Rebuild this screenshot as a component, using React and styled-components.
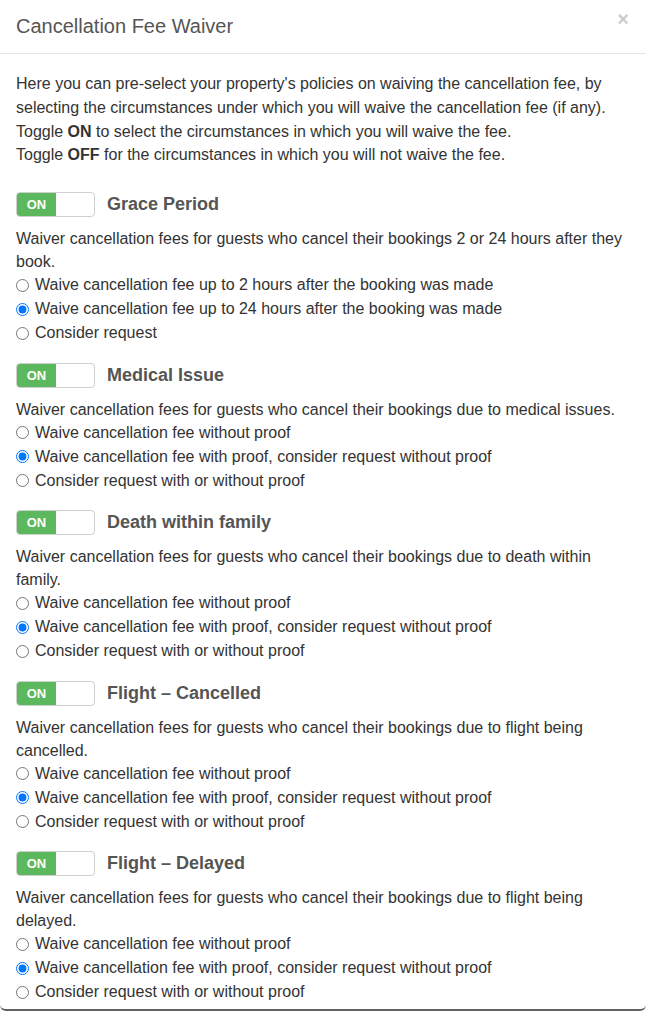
import React, { useState } from "react";
import styled, { createGlobalStyle } from "styled-components";

const GlobalStyle = createGlobalStyle`
  html, body {
    margin: 0;
    padding: 0;
    background: #ffffff;
  }
  body {
    font-family: "Liberation Sans", Arial, sans-serif;
    color: #333333;
  }
  * {
    box-sizing: border-box;
  }
`;

const Modal = styled.div`
  width: 646px;
  background: #ffffff;
  border-bottom: 2px solid #626262;
  border-radius: 0 0 6px 6px;
`;

const Header = styled.div`
  display: flex;
  justify-content: space-between;
  align-items: flex-start;
  padding: 12px 16px 13px 16px;
  border-bottom: 1px solid #e5e5e5;
`;

const Title = styled.h4`
  margin: 0;
  font-size: 20px;
  line-height: 28px;
  font-weight: normal;
  color: #555555;
`;

const Close = styled.button`
  border: 0;
  background: transparent;
  padding: 0;
  margin: -3px 1px 0 0;
  font-family: "Liberation Sans", Arial, sans-serif;
  font-size: 20px;
  font-weight: bold;
  line-height: 1;
  color: #000000;
  opacity: 0.2;
  cursor: pointer;
`;

const Body = styled.div`
  padding: 18px 16px 5px 16px;
  font-size: 16px;
`;

const Intro = styled.p`
  margin: 0;
  line-height: ${(p) => p.$lh || "23px"};
`;

const Sections = styled.div`
  display: flex;
  flex-direction: column;
  gap: 17.5px;
  margin-top: 26px;
`;

const Section = styled.section``;

const SectionHead = styled.div`
  display: flex;
  align-items: center;
  gap: 12px;
  margin-bottom: 10px;
`;

const Switch = styled.button`
  display: flex;
  width: 79px;
  height: 25px;
  padding: 0;
  border: 1px solid #cfcfcf;
  border-radius: 4px;
  overflow: hidden;
  background: #ffffff;
  cursor: pointer;
  flex-direction: ${(p) => (p.$on ? "row" : "row-reverse")};
`;

const SwitchLabel = styled.span`
  width: 39px;
  height: 100%;
  display: flex;
  align-items: center;
  justify-content: center;
  background: ${(p) => (p.$on ? "#5cb85c" : "#eeeeee")};
  color: ${(p) => (p.$on ? "#ffffff" : "#333333")};
  font-family: "Liberation Sans", Arial, sans-serif;
  font-size: 13px;
  font-weight: bold;
`;

const SectionTitle = styled.h3`
  margin: 0;
  font-size: 18px;
  font-weight: bold;
  line-height: 25px;
  color: #555555;
`;

const Desc = styled.p`
  margin: 0;
  line-height: 23px;
`;

const Options = styled.div`
  display: flex;
  flex-direction: column;
`;

const Option = styled.label`
  display: flex;
  align-items: center;
  height: 24px;
  line-height: 24px;
  cursor: pointer;

  input {
    margin: 0 6px 0 0;
    width: 13px;
    height: 13px;
  }
`;

const sections = [
  {
    id: "grace",
    title: "Grace Period",
    desc: "Waiver cancellation fees for guests who cancel their bookings 2 or 24 hours after they book.",
    options: [
      "Waive cancellation fee up to 2 hours after the booking was made",
      "Waive cancellation fee up to 24 hours after the booking was made",
      "Consider request",
    ],
  },
  {
    id: "medical",
    title: "Medical Issue",
    desc: "Waiver cancellation fees for guests who cancel their bookings due to medical issues.",
  },
  {
    id: "death",
    title: "Death within family",
    desc: "Waiver cancellation fees for guests who cancel their bookings due to death within family.",
  },
  {
    id: "flight-cancelled",
    title: "Flight \u2013 Cancelled",
    desc: "Waiver cancellation fees for guests who cancel their bookings due to flight being cancelled.",
  },
  {
    id: "flight-delayed",
    title: "Flight \u2013 Delayed",
    desc: "Waiver cancellation fees for guests who cancel their bookings due to flight being delayed.",
  },
];

const proofOptions = [
  "Waive cancellation fee without proof",
  "Waive cancellation fee with proof, consider request without proof",
  "Consider request with or without proof",
];

function WaiverSection({ data }) {
  const [on, setOn] = useState(true);
  const [choice, setChoice] = useState(1);
  const opts = data.options || proofOptions;

  return (
    <Section>
      <SectionHead>
        <Switch type="button" $on={on} onClick={() => setOn(!on)}>
          <SwitchLabel $on={on}>{on ? "ON" : "OFF"}</SwitchLabel>
        </Switch>
        <SectionTitle>{data.title}</SectionTitle>
      </SectionHead>
      <Desc>{data.desc}</Desc>
      <Options>
        {opts.map((o, i) => (
          <Option key={i}>
            <input
              type="radio"
              name={data.id}
              checked={choice === i}
              onChange={() => setChoice(i)}
            />
            {o}
          </Option>
        ))}
      </Options>
    </Section>
  );
}

export default function App() {
  return (
    <>
      <GlobalStyle />
      <Modal>
        <Header>
          <Title>Cancellation Fee Waiver</Title>
          <Close aria-label="Close">×</Close>
        </Header>
        <Body>
          <Intro $lh="24px">
            Here you can pre-select your property's policies on waiving the
            cancellation fee, by selecting the circumstances under which you
            will waive the cancellation fee (if any).
          </Intro>
          <Intro>
            Toggle <b>ON</b> to select the circumstances in which you will waive
            the fee.
            <br />
            Toggle <b>OFF</b> for the circumstances in which you will not waive
            the fee.
          </Intro>
          <Sections>
            {sections.map((s) => (
              <WaiverSection key={s.id} data={s} />
            ))}
          </Sections>
        </Body>
      </Modal>
    </>
  );
}
